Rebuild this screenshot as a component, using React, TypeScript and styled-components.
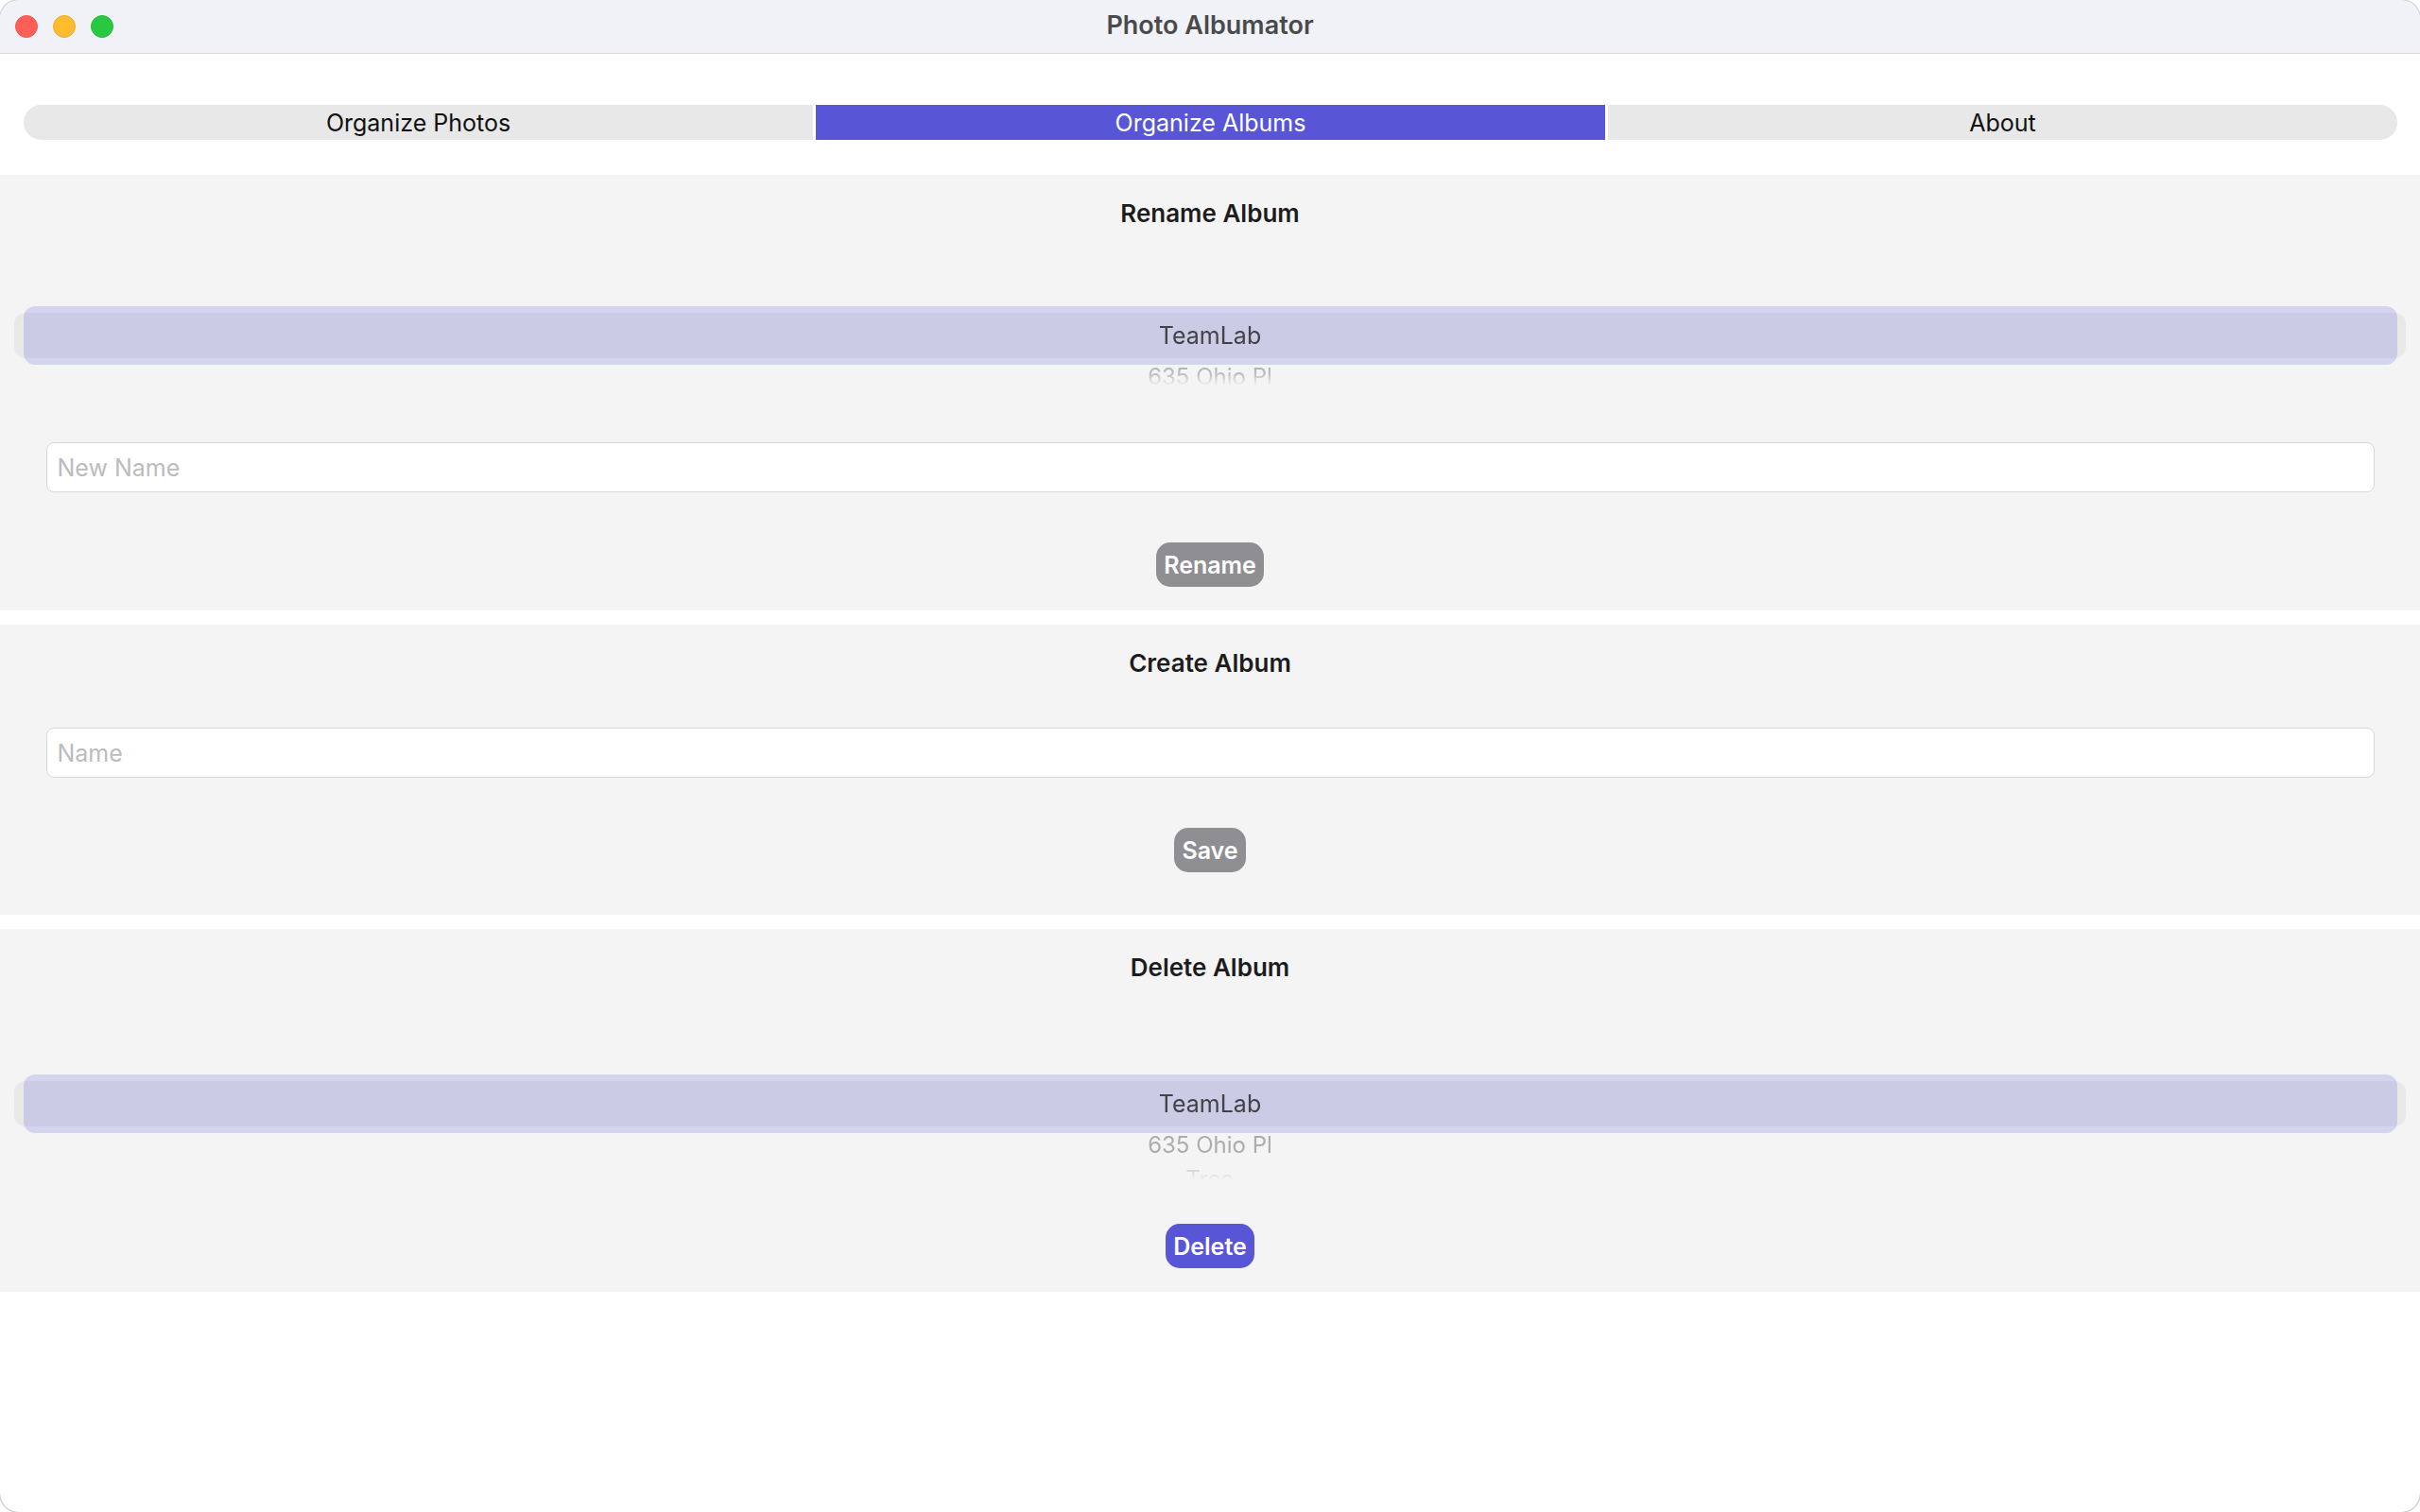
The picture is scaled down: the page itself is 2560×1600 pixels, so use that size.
import React, { useState } from "react";
import styled, { createGlobalStyle, css } from "styled-components";

const GlobalStyle = createGlobalStyle`
  *, *::before, *::after { box-sizing: border-box; }
  body {
    margin: 0;
    background: #ffffff;
    font-family: Inter, "Liberation Sans", sans-serif;
    font-size: 25px;
    line-height: 32px;
  }
  button, input { font: inherit; }
`;

const accent = "#5856d6";

const Window = styled.div`
  min-height: 100vh;
  display: flex;
  flex-direction: column;
  background: #ffffff;
  border-radius: 20px;
  overflow: hidden;
  box-shadow: 0 0 2px 0 #555555;
`;

const TitleBar = styled.header`
  display: grid;
  grid-template-columns: 1fr auto 1fr;
  align-items: center;
  height: 57px;
  padding: 0 16px;
  background: #f1f2f8;
  border-bottom: 1px solid #d9d9dc;
`;

const Lights = styled.div`
  display: flex;
  gap: 16px;
`;

const Light = styled.button<{ $fill: string; $edge: string }>`
  width: 24px;
  height: 24px;
  padding: 0;
  border: 1px solid ${(p) => p.$edge};
  border-radius: 50%;
  background: ${(p) => p.$fill};
`;

const Title = styled.h1`
  margin: 0;
  padding-bottom: 2px;
  font-size: 27px;
  font-weight: 600;
  color: #4a4a4c;
`;

const Tabs = styled.nav`
  display: grid;
  grid-template-columns: repeat(3, 1fr);
  gap: 3px;
  margin: 54px 24px 37px 25px;
  border-radius: 19px;
  overflow: hidden;
`;

const Tab = styled.button<{ $active: boolean }>`
  height: 37px;
  padding: 0;
  border: 0;
  background: ${(p) => (p.$active ? accent : "#e8e8e8")};
  color: ${(p) => (p.$active ? "#ffffff" : "#111111")};
`;

const Sections = styled.main`
  display: flex;
  flex-direction: column;
  gap: 15px;
`;

const Section = styled.section<{ $bottom?: number }>`
  display: flex;
  flex-direction: column;
  align-items: center;
  padding: 25px 0 ${(p) => p.$bottom ?? 25}px;
  background: #f4f4f4;
`;

const Heading = styled.h2`
  margin: 0;
  font-size: 26px;
  font-weight: 600;
  color: #1c1c1e;
`;

const Field = styled.input`
  width: calc(100% - 97px);
  height: 53px;
  padding: 0 11px;
  border: 1px solid #d8d8d8;
  border-radius: 8px;
  background: #ffffff;
  color: #1c1c1e;
  outline: none;
  &::placeholder { color: #bcbcbe; opacity: 1; }
`;

const FieldRow = styled.div<{ $top: number }>`
  width: 100%;
  display: flex;
  justify-content: center;
  padding: ${(p) => p.$top}px 0 53px;
`;

const Action = styled.button<{ $primary?: boolean }>`
  height: 47px;
  padding: 0 8px;
  border: 0;
  border-radius: 15px;
  background: ${(p) => (p.$primary ? accent : "#8e8e93")};
  color: #ffffff;
  font-weight: 600;
`;

const Wheel = styled.div<{ $height: number; $top: number; $bottom: number }>`
  width: 100%;
  height: ${(p) => p.$height}px;
  margin: ${(p) => p.$top}px 0 ${(p) => p.$bottom}px;
  display: grid;
  align-items: center;
`;

const layer = css`
  grid-area: 1 / 1;
  border-radius: 12px;
`;

const Track = styled.div`
  ${layer}
  height: 48px;
  margin: 0 15px;
  background: #e9e9e9;
`;

const Highlight = styled.div`
  ${layer}
  height: 62px;
  margin: 0 24px 0 25px;
  background: rgba(88, 86, 214, 0.2);
`;

const Reel = styled.div<{ $height: number }>`
  grid-area: 1 / 1;
  z-index: 1;
  height: ${(p) => p.$height}px;
  padding-top: ${(p) => (p.$height - 62) / 2}px;
  overflow: hidden;
  display: flex;
  flex-direction: column;
  mask-image: linear-gradient(to top, transparent 0, rgba(0, 0, 0, 0.75) 12px, #000 24px);
`;

const depths = [
  { height: 62, size: 25, color: "#424247" },
  { height: 26, size: 24, color: "#adadad" },
  { height: 46, size: 24, color: "#c8c8c8" },
];

const Item = styled.label<{ $depth: number }>`
  flex: none;
  display: flex;
  align-items: center;
  justify-content: center;
  height: ${(p) => depths[p.$depth].height}px;
  font-size: ${(p) => depths[p.$depth].size}px;
  color: ${(p) => depths[p.$depth].color};
`;

const Radio = styled.input`
  appearance: none;
  width: 0;
  height: 0;
  margin: 0;
`;

function AlbumWheel(props: { name: string; albums: string[]; height: number; top: number; bottom: number }) {
  return (
    <Wheel role="radiogroup" aria-label="Album" $height={props.height} $top={props.top} $bottom={props.bottom}>
      <Track />
      <Highlight />
      <Reel $height={props.height}>
        {props.albums.map((album, i) => (
          <Item key={album} $depth={i}>
            <Radio type="radio" name={props.name} defaultChecked={i === 0} />
            {album}
          </Item>
        ))}
      </Reel>
    </Wheel>
  );
}

const tabs = ["Organize Photos", "Organize Albums", "About"];

export default function App() {
  const [tab, setTab] = useState("Organize Albums");
  return (
    <>
      <GlobalStyle />
      <Window>
        <TitleBar>
          <Lights>
            <Light aria-label="Close" $fill="#ff5f57" $edge="#ee5a52" />
            <Light aria-label="Minimize" $fill="#febc2e" $edge="#e8ab30" />
            <Light aria-label="Zoom" $fill="#28c840" $edge="#27b93c" />
          </Lights>
          <Title>Photo Albumator</Title>
        </TitleBar>
        <Tabs>
          {tabs.map((name) => (
            <Tab key={name} $active={name === tab} onClick={() => setTab(name)}>
              {name}
            </Tab>
          ))}
        </Tabs>
        <Sections>
          <Section>
            <Heading>Rename Album</Heading>
            <AlbumWheel name="rename-album" albums={["TeamLab", "635 Ohio Pl"]} height={106} top={60} bottom={0} />
            <FieldRow $top={60}>
              <Field aria-label="New Name" placeholder="New Name" />
            </FieldRow>
            <Action>Rename</Action>
          </Section>
          <Section $bottom={45}>
            <Heading>Create Album</Heading>
            <FieldRow $top={52}>
              <Field aria-label="Name" placeholder="Name" />
            </FieldRow>
            <Action>Save</Action>
          </Section>
          <Section>
            <Heading>Delete Album</Heading>
            <AlbumWheel name="delete-album" albums={["TeamLab", "635 Ohio Pl", "Tree"]} height={162} top={47} bottom={46} />
            <Action $primary>Delete</Action>
          </Section>
        </Sections>
      </Window>
    </>
  );
}
